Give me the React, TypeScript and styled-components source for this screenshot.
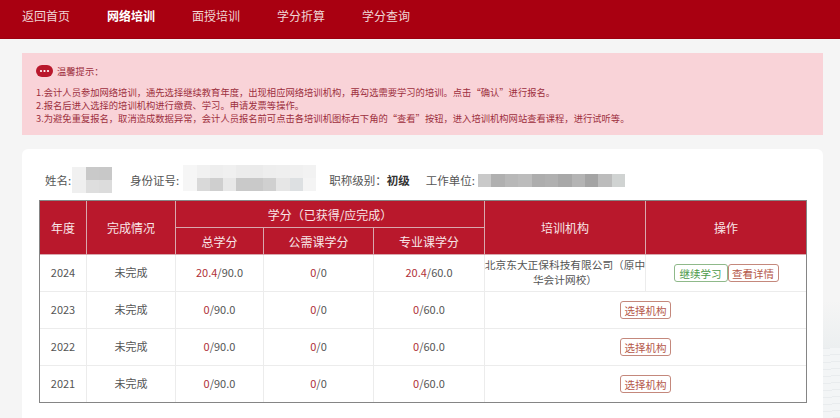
import React from 'react';
import styled, { createGlobalStyle } from 'styled-components';

const GlobalStyle = createGlobalStyle`
  html, body {
    margin: 0;
    padding: 0;
    height: 418px;
    overflow: hidden;
    background: #f5f5f5;
    font-family: "Noto Sans CJK SC", "Noto Sans", sans-serif;
  }
`;

const Page = styled.div`
  width: 840px;
  height: 418px;
  overflow: hidden;
  background:
    repeating-linear-gradient(176deg, #e9ecee 0 1px, #f3f5f6 1px 7px) right bottom / 17px 70px no-repeat,
    linear-gradient(#f5f5f5, #eceff0) right 300px / 17px 48px no-repeat;
`;

const Header = styled.header`
  height: 39px;
  background: #a90011;
  display: flex;
  align-items: center;
  gap: 37px;
  padding: 0 0 7px 22px;
  box-sizing: border-box;
  border-bottom: 1px solid #9c0010;
`;

const NavItem = styled.a<{ $active?: boolean }>`
  font-size: 12px;
  line-height: 16px;
  color: ${(props) => (props.$active ? '#ffffff' : '#f0d6d6')};
  font-weight: ${(props) => (props.$active ? 700 : 400)};
`;

const Main = styled.main`
  width: 801px;
  margin: 14px 0 0 22px;
  display: flex;
  flex-direction: column;
  gap: 14px;
`;

const Notice = styled.section`
  height: 82px;
  box-sizing: border-box;
  background: #f9d3d8;
  padding: 12px 14px 0;
  color: #9d2f3d;
  font-size: 9.3px;
  line-height: 13px;
`;

const NoticeTitle = styled.div`
  display: flex;
  align-items: center;
  gap: 4px;
  height: 12px;
  margin-bottom: 9px;
`;

const NoticeLine = styled.div`
  white-space: nowrap;
`;

const Card = styled.section`
  background: #ffffff;
  border-radius: 6px 6px 0 0;
  padding: 16px 17px 16px;
  height: 269px;
  box-sizing: border-box;
`;

const InfoRow = styled.div`
  display: flex;
  align-items: center;
  height: 30px;
  padding-left: 6px;
  margin-bottom: 5px;
  font-size: 11.5px;
  color: #555555;
`;

const Field = styled.span<{ $gap: number }>`
  display: flex;
  align-items: center;
  margin-right: ${(props) => props.$gap}px;
`;

const Strong = styled.b`
  color: #333333;
`;

const Mosaic = styled.span<{ $cols: number; $cell: number; $offset: number; $lift?: number }>`
  display: grid;
  grid-template-columns: repeat(${(props) => props.$cols}, ${(props) => props.$cell}px);
  grid-auto-rows: 13px;
  margin-left: ${(props) => props.$offset}px;
  margin-bottom: ${(props) => props.$lift || 0}px;
`;

const Grid = styled.table`
  width: 767px;
  border-collapse: collapse;
  table-layout: fixed;
  outline: 1px solid #858585;
  outline-offset: -1px;
  font-size: 11px;
  color: #555555;
`;

const Th = styled.th`
  background: #b9182c;
  color: #f8e6e8;
  font-weight: 400;
  font-size: 12px;
  border: 1px solid #d9a8ae;
  padding: 0;
  height: 26px;
`;

const Td = styled.td`
  border: 1px solid #ececec;
  padding: 0 0 2px;
  box-sizing: border-box;
  height: 37px;
  text-align: center;
  line-height: 15px;
`;

const OrgText = styled.div`
  font-size: 10.7px;
  margin: 0 -1px;
`;

const Earned = styled.span`
  color: #b03038;
`;

const Actions = styled.div`
  display: flex;
  justify-content: center;
  margin-bottom: -2px;
`;

const ActionButton = styled.a<{ $tone: 'green' | 'red' }>`
  display: inline-flex;
  align-items: center;
  justify-content: center;
  height: 18px;
  box-sizing: border-box;
  padding: 0 ${(props) => (props.$tone === 'green' ? 5 : 3.5)}px;
  border-radius: 3px;
  font-size: 10.5px;
  border: 1px solid ${(props) => (props.$tone === 'green' ? '#8fb98a' : '#c4887c')};
  color: ${(props) => (props.$tone === 'green' ? '#4c9a48' : '#b5584a')};
`;

const Dots = () => (
  <svg width="17" height="12" viewBox="0 0 17 12">
    <rect width="17" height="12" rx="6" fill="#b9182c" />
    <circle cx="5" cy="6" r="1.1" fill="#fff" />
    <circle cx="8.5" cy="6" r="1.1" fill="#fff" />
    <circle cx="12" cy="6" r="1.1" fill="#fff" />
  </svg>
);

const nameBlur = ['#f1f1f1', '#c9c9c9', '#c8c8c8', '#efefef', '#dedede', '#dcdcdc'];
const idBlur = [
  '#f6f6f6', '#f1f1f1', '#eeeeee', '#f0f0f0', '#ececec', '#ebebeb', '#eeeeee', '#efefef', '#f0f0f0', '#f2f2f2',
  '#f6f6f6', '#d9d9d9', '#cfcfcf', '#e8e8e8', '#c9c9c9', '#c9c9c9', '#d0d0d0', '#e6e6e6', '#dde0e2', '#f4f4f4',
];
const unitBlur = ['#c9c9c9', '#b0b0b0', '#b8b8b8', '#bcbcbc', '#adadad', '#b0b0b0', '#a8a8a8', '#b4b4b4', '#a4a4a4', '#bcbcbc', '#d0d3d2'];

const rows = [
  { year: 2024, total: '20.4', pro: '20.4' },
  { year: 2023, total: '0', pro: '0' },
  { year: 2022, total: '0', pro: '0' },
  { year: 2021, total: '0', pro: '0' },
];

const App: React.FC = () => (
  <Page>
    <GlobalStyle />
    <Header>
      <NavItem>返回首页</NavItem>
      <NavItem $active>网络培训</NavItem>
      <NavItem>面授培训</NavItem>
      <NavItem>学分折算</NavItem>
      <NavItem>学分查询</NavItem>
    </Header>
    <Main>
      <Notice>
        <NoticeTitle>
          <Dots />
          温馨提示：
        </NoticeTitle>
        <NoticeLine>1.会计人员参加网络培训，通先选择继续教育年度，出现相应网络培训机构，再勾选需要学习的培训。点击“确认”进行报名。</NoticeLine>
        <NoticeLine>2.报名后进入选择的培训机构进行缴费、学习。申请发票等操作。</NoticeLine>
        <NoticeLine>3.为避免重复报名，取消造成数据异常，会计人员报名前可点击各培训机图标右下角的“查看”按钮，进入培训机构网站查看课程，进行试听等。</NoticeLine>
      </Notice>
      <Card>
        <InfoRow>
          <Field $gap={18}>
            姓名:
            <Mosaic $cols={3} $cell={13.3} $offset={1}>
              {nameBlur.map((c, i) => <span key={i} style={{ background: c }} />)}
            </Mosaic>
          </Field>
          <Field $gap={13}>
            身份证号:
            <Mosaic $cols={10} $cell={13.3} $offset={4} $lift={4}>
              {idBlur.map((c, i) => <span key={i} style={{ background: c }} />)}
            </Mosaic>
          </Field>
          <Field $gap={16}>
            职称级别：<Strong>初级</Strong>
          </Field>
          <Field $gap={0}>
            工作单位:
            <Mosaic $cols={11} $cell={13.4} $offset={3}>
              {unitBlur.map((c, i) => <span key={i} style={{ background: c }} />)}
            </Mosaic>
          </Field>
        </InfoRow>
        <Grid>
          <colgroup>
            <col width="47" />
            <col width="89" />
            <col width="88" />
            <col width="110" />
            <col width="111" />
            <col width="161" />
            <col width="161" />
          </colgroup>
          <thead>
            <tr>
              <Th rowSpan={2}>年度</Th>
              <Th rowSpan={2}>完成情况</Th>
              <Th colSpan={3}>学分（已获得/应完成）</Th>
              <Th rowSpan={2}>培训机构</Th>
              <Th rowSpan={2}>操作</Th>
            </tr>
            <tr>
              <Th>总学分</Th>
              <Th>公需课学分</Th>
              <Th>专业课学分</Th>
            </tr>
          </thead>
          <tbody>
            {rows.map((row, index) => (
              <tr key={row.year}>
                <Td>{row.year}</Td>
                <Td>未完成</Td>
                <Td><Earned>{row.total}</Earned>/90.0</Td>
                <Td><Earned>0</Earned>/0</Td>
                <Td><Earned>{row.pro}</Earned>/60.0</Td>
                {index === 0 ? (
                  <>
                    <Td><OrgText>北京东大正保科技有限公司（原中华会计网校）</OrgText></Td>
                    <Td>
                      <Actions>
                        <ActionButton $tone="green">继续学习</ActionButton>
                        <ActionButton $tone="red">查看详情</ActionButton>
                      </Actions>
                    </Td>
                  </>
                ) : (
                  <Td colSpan={2}>
                    <Actions>
                      <ActionButton $tone="red">选择机构</ActionButton>
                    </Actions>
                  </Td>
                )}
              </tr>
            ))}
          </tbody>
        </Grid>
      </Card>
    </Main>
  </Page>
);

export default App;
